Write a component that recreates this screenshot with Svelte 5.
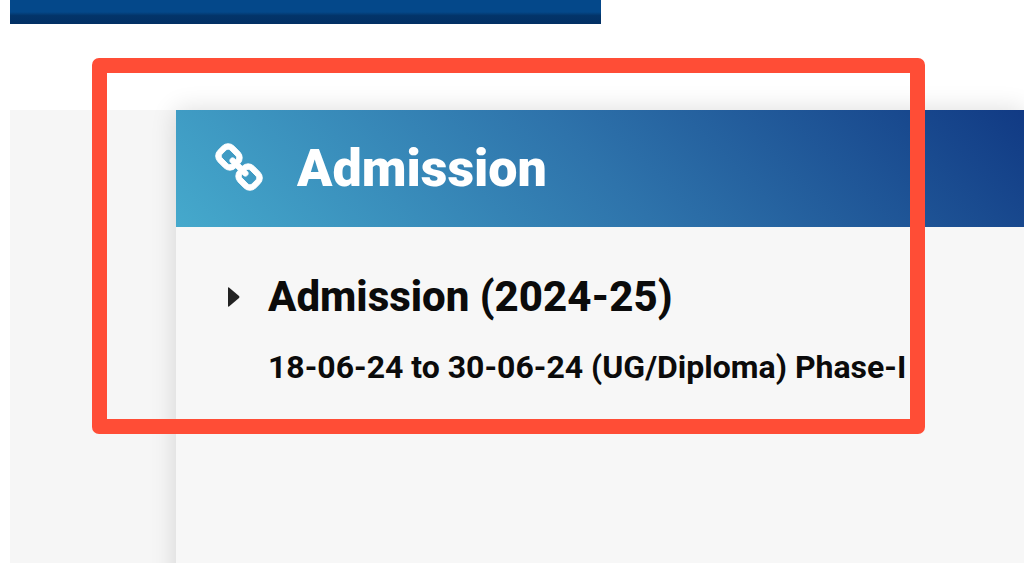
<script lang="ts">
	type Notice = { title: string; detail: string };

	let heading = "Admission";
	let notices: Notice[] = [
		{ title: "Admission (2024-25)", detail: "18-06-24 to 30-06-24 (UG/Diploma) Phase-I" }
	];
</script>

<div class="page">
	<header class="banner"></header>

	<main class="content">
		<section class="card">
			<div class="cardHeader">
				<svg class="chain" viewBox="-8 -8 1680 1680" aria-hidden="true">
					<path d="M1456 1216q0-40-28-68l-208-208q-28-28-68-28-42 0-72 32 3 3 19 18.500t21.500 21.500 15 19 13 25.500 3.500 27.500q0 40-28 68t-68 28q-15 0-27.500-3.500t-25.500-13-19-15-21.500-21.500-18.500-19q-33 31-33 73 0 40 28 68l206 207q27 27 68 27 40 0 68-26l147-146q28-28 28-67zm-703-705q0-40-28-68l-206-207q-28-28-68-28-39 0-68 27l-147 146q-28 28-28 67 0 40 28 68l208 208q27 27 68 27 42 0 72-31-3-3-19-18.500t-21.500-21.500-15-19-13-25.500-3.500-27.500q0-40 28-68t68-28q15 0 27.500 3.500t25.500 13 19 15 21.500 21.500 18.500 19q33-31 33-73zm895 705q0 120-85 203l-147 146q-83 83-203 83-121 0-204-85l-206-207q-83-83-83-203 0-123 88-209l-88-88q-86 88-208 88-120 0-204-84l-208-208q-84-84-84-204t85-203l147-146q83-83 203-83 121 0 204 85l206 207q83 83 83 203 0 123-88 209l88 88q86-88 208-88 120 0 204 84l208 208q84 84 84 204z" />
				</svg>
				<h2>{heading}</h2>
			</div>
			<ul class="notices">
				{#each notices as notice}
					<li>
						<svg class="caret" viewBox="0 0 12 20" aria-hidden="true">
							<path fill="currentColor" d="M0 1Q0 0 1 .500L11 9Q12 10 11 11L1 19.500Q0 20 0 19Z" />
						</svg>
						<div>
							<h3>{notice.title}</h3>
							<p>{notice.detail}</p>
						</div>
					</li>
				{/each}
			</ul>
		</section>
	</main>

	<div class="highlight"></div>
</div>

<style>
	:global(body) {
		margin: 0;
		background: #fff;
		font-family: Roboto, "Liberation Sans", sans-serif;
	}

	.page {
		position: relative;
		display: flex;
		flex-direction: column;
		min-height: 100vh;
		padding-left: 10px;
		box-sizing: border-box;
		overflow: hidden;
	}

	.banner {
		width: 58.3%;
		height: 24px;
		background: linear-gradient(#04488a 50%, #033469 65%, #023064);
	}

	.content {
		flex: 1;
		display: flex;
		margin-top: 86px;
		padding-left: 166px;
		background: #f6f6f6;
	}

	.card {
		flex: 1;
		margin-bottom: -40px;
		background: #f7f7f7;
		box-shadow: 0 0 24px rgba(0, 0, 0, 0.14);
	}

	.cardHeader {
		display: flex;
		align-items: center;
		gap: 34px;
		height: 117px;
		padding-left: 39px;
		color: #fff;
		background: linear-gradient(45deg, #45a9cc, #2e73ab 50%, #113a84);
	}

	.chain {
		width: 48px;
		height: 48px;
		padding-bottom: 4px;
		fill: currentColor;
		stroke: currentColor;
		stroke-width: 32;
	}

	h2,
	h3,
	p {
		margin: 0;
	}

	h2 {
		font-size: 52px;
		line-height: 60px;
		font-weight: 900;
	}

	.notices {
		margin: 0;
		padding: 46px 0 48px 52px;
		list-style: none;
		color: #0b0b0b;
	}

	li {
		display: flex;
		gap: 28px;
	}

	.caret {
		flex: none;
		width: 12px;
		height: 20px;
		margin-top: 14px;
		color: #222;
	}

	h3 {
		font-size: 42px;
		line-height: 48px;
		font-weight: 800;
	}

	p {
		margin-top: 28px;
		font-size: 32px;
		line-height: 36px;
		font-weight: 700;
		white-space: nowrap;
	}

	.highlight {
		position: absolute;
		top: 58px;
		left: 92px;
		right: 99px;
		height: 376px;
		box-sizing: border-box;
		border: 15px solid #ff4d36;
		border-radius: 7px;
		pointer-events: none;
	}
</style>
